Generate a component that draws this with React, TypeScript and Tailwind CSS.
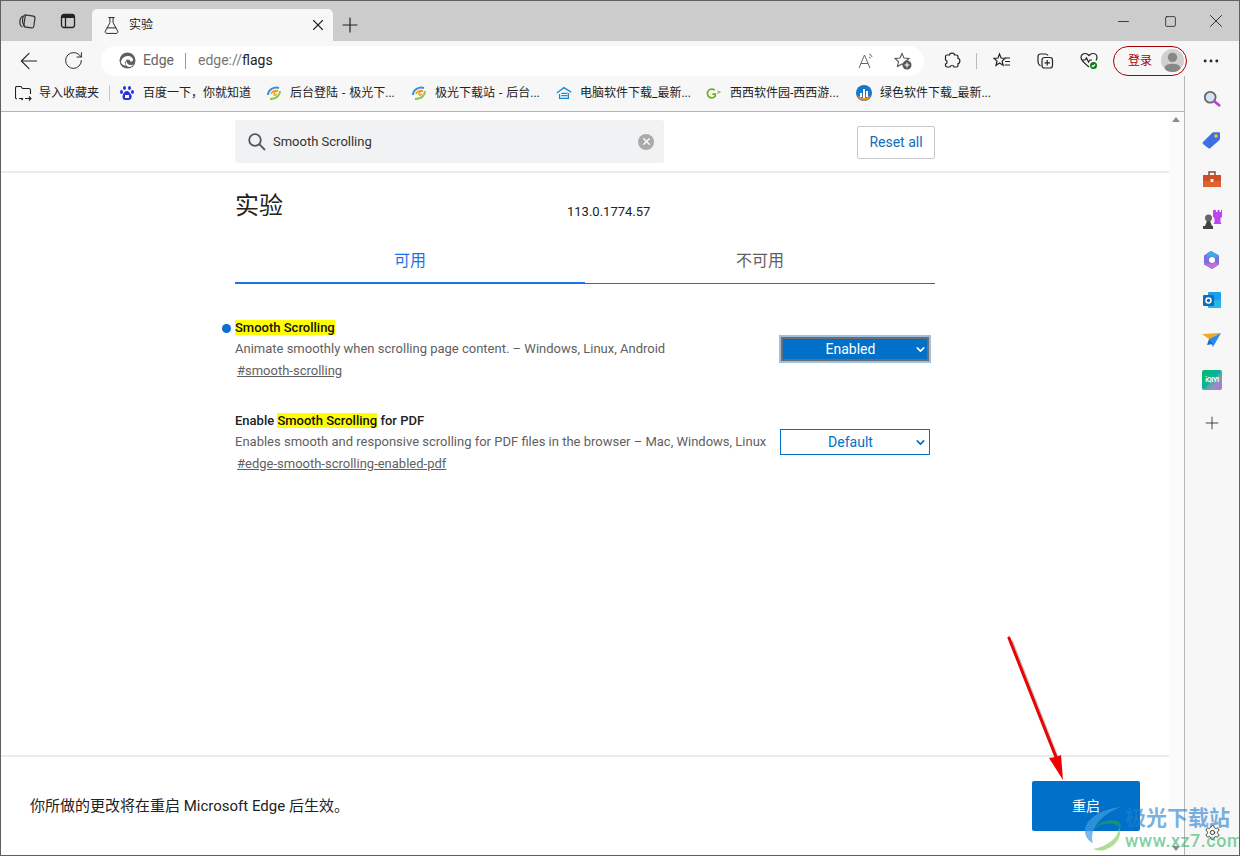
import React from 'react';
import { ArrowLeft, ChevronDown, FlaskConical, MoreHorizontal, Minus, Plus, RotateCw, Settings, Square, X } from 'lucide-react';

const cjk = "font-['Roboto','Noto_Sans_CJK_SC',sans-serif]";

const EdgeLogo = () => (
  <svg width="17" height="17" viewBox="0 0 17 17">
    <circle cx="8.5" cy="8.5" r="8" fill="#5f5f5f" />
    <path d="M2 11c0-4 3-7 7-7 3 0 5 2 5 4 0 1-1 1.700-2.500 1.700-.5-2-2-2.500-3.500-2-2 1-2.500 3.500-1 6-1.500-.2-4-1-5-2.700z" fill="#fff" />
    <path d="M8 9c-.5 2 1 4 4 4 1 0 2-.3 2.500-1-1 2.500-4 3.500-6 2.500C6.500 13.500 6.500 10.500 8 9z" fill="#fff" />
  </svg>
);

const Swirl = () => (
  <svg width="16" height="16" viewBox="0 0 16 16" fill="none">
    <path d="M13 3C8 1 2 5 2 10" stroke="#3b8ed8" strokeWidth="2" />
    <path d="M14 6c0 4-3 8-10 8" stroke="#8cc63f" strokeWidth="2" />
    <path d="M5 9c1-3 5-4 7-3-2 0-4 1-4 3s2 1 3 0" stroke="#f0a020" strokeWidth="1.500" />
  </svg>
);

const Baidu = () => (
  <svg width="16" height="16" viewBox="0 0 16 16" fill="#2932e1">
    <ellipse cx="5.500" cy="3" rx="1.500" ry="2" />
    <ellipse cx="10.500" cy="3" rx="1.500" ry="2" />
    <ellipse cx="2.500" cy="7" rx="1.500" ry="2" />
    <ellipse cx="13.500" cy="7" rx="1.500" ry="2" />
    <path d="M8 6c2 0 2.500 2 4 3.500S12.500 15 10 15H6c-2.500 0-3-3.500-2-5.500S6 6 8 6z" />
    <rect x="6" y="10" width="4" height="3" fill="#fff" />
  </svg>
);

const HouseIcon = () => (
  <svg width="18" height="16" viewBox="0 0 18 16" fill="none" stroke="#1a8ed0" strokeWidth="1.500">
    <path d="M1 8l8-6 8 5M4 9v5h10V8" />
    <path d="M6 11h7M6 8.500h7" />
  </svg>
);

const GreenG = () => (
  <svg width="20" height="18" viewBox="0 0 20 18" fill="none" stroke="#6fb01a" strokeWidth="2.200">
    <path d="M11 5.500a5.500 5.500 0 1 0 .5 7.500V10.500H8" />
    <path d="M14 6.500l4 1.500-4 1.500" strokeWidth="1" />
  </svg>
);

const GreenSoft = () => (
  <svg width="16" height="16" viewBox="0 0 16 16">
    <circle cx="8" cy="8" r="8" fill="#1677c9" />
    <path d="M1 9c2 5 12 5 14 0l-2 5-5 2-5-2z" fill="#f08a1d" />
    <rect x="7" y="4" width="2" height="9" fill="#fff" />
    <rect x="4" y="8" width="2" height="4" fill="#fff" />
    <rect x="10" y="6" width="2" height="6" fill="#fff" />
  </svg>
);

const bookmarks = [
  { icon: <Baidu />, label: '百度一下，你就知道', left: 'w-[147px]' },
  { icon: <Swirl />, label: '后台登陆 - 极光下...', left: 'w-[145px]' },
  { icon: <Swirl />, label: '极光下载站 - 后台...', left: 'w-[145px]' },
  { icon: <HouseIcon />, label: '电脑软件下载_最新...', left: 'w-[150px]' },
  { icon: <GreenG />, label: '西西软件园-西西游...', left: 'w-[150px]' },
  { icon: <GreenSoft />, label: '绿色软件下载_最新...', left: 'w-[145px]' },
];

const TabStrip = () => (
  <div className="flex h-[40px] items-end bg-[#cccccc]">
    <div className="flex h-full w-[91px] items-center">
      <svg className="ml-[17px]" width="18" height="18" viewBox="0 0 18 18" fill="none" stroke="#333" strokeWidth="1.200">
        <rect x="6.500" y="3.500" width="10" height="12" rx="2" transform="rotate(8 11 9)" />
        <path d="M5 4C3 5 1.500 8 2 12c.2 1.500 1 2.500 2.500 3" />
        <path d="M8 2.500C6 3 4.500 5 4.500 8s.5 5 2.500 6.500" />
      </svg>
      <svg className="ml-[24px]" width="16" height="16" viewBox="0 0 16 16" fill="none" stroke="#222" strokeWidth="1.300">
        <rect x="1.500" y="1.500" width="13" height="13" rx="2.500" />
        <rect x="2" y="2" width="12" height="3" fill="#222" stroke="none" />
        <path d="M5.500 5v9" />
      </svg>
    </div>
    <div className="flex h-[32px] w-[241px] items-center rounded-t-[5px] bg-[#f7f7f7] pl-[10px] pr-[6px]">
      <FlaskConical size={19} strokeWidth={1.200} className="text-[#222]" />
      <span className={`ml-[8px] flex-1 text-[12px] text-[#222] ${cjk}`}>实验</span>
      <X size={18} strokeWidth={1.500} className="text-[#222]" />
    </div>
    <Plus size={24} strokeWidth={1.200} className="mb-[4px] ml-[5px] text-[#222]" />
    <div className="ml-auto flex h-full items-center text-[#222]">
      <Minus size={17} strokeWidth={1.200} className="mr-[32px]" />
      <Square size={13} strokeWidth={1.500} className="mr-[28px]" />
      <X size={22} strokeWidth={1} className="mr-[12px]" />
    </div>
  </div>
);

const Toolbar = () => (
  <div className="flex h-[35px] items-center bg-[#f7f7f7] pt-[4px]">
    <ArrowLeft size={26} strokeWidth={1} className="ml-[15px] text-[#222]" />
    <RotateCw size={21} strokeWidth={1.100} className="ml-[21px] text-[#222]" />
    <div className="ml-[17px] flex h-[30px] w-[823px] items-center rounded-full bg-white pl-[18px] pr-[12px]">
      <EdgeLogo />
      <span className={`ml-[7px] text-[14px] text-[#666] ${cjk}`}>Edge</span>
      <span className="mx-[11px] h-[16px] w-px bg-[#999]" />
      <span className={`ml-[1px] text-[14px] text-[#777] ${cjk}`}>
        edge://<span className="text-[#222]">flags</span>
      </span>
      <div className="ml-auto flex items-center gap-[18px]">
        <svg width="18" height="18" viewBox="0 0 18 18" fill="none" stroke="#666" strokeWidth="1">
          <path d="M1 16L6.500 3l5.500 13M3 11.500h7" />
          <path d="M11 2c1.500.5 2.500 1.500 3 3M11 5c.8.3 1.300.8 1.500 1.500" />
        </svg>
        <svg width="18" height="18" viewBox="0 0 18 18" fill="none" stroke="#555" strokeWidth="1.100">
          <path d="M8 1.500l2 4.500 5 .5-3.500 3 1 5-4.500-2.500L3.500 14.500l1-5L1 6.500 6 6z" />
          <circle cx="13" cy="13" r="4.500" fill="#555" stroke="none" />
          <path d="M13 10.500v5M10.500 13h5" stroke="#fff" />
        </svg>
      </div>
    </div>
    <svg className="ml-[19px]" width="18" height="18" viewBox="0 0 18 18" fill="none" stroke="#222" strokeWidth="1.200">
      <path d="M6.500 3c0-2.500 5-2.500 5 0h2c1 0 1.500.5 1.500 1.500v2c2.500 0 2.500 5 0 5v2c0 1-.5 1.500-1.500 1.500H11c0-2-4-2-4 0H4c-1 0-1.500-.5-1.500-1.500V12c2 0 2-4 0-4V4.500C2.500 3.500 3 3 4 3z" />
    </svg>
    <span className="ml-[15px] h-[16px] w-px bg-[#bbb]" />
    <svg className="ml-[16px]" width="18" height="18" viewBox="0 0 18 18" fill="none" stroke="#222" strokeWidth="1.200">
      <path d="M6.500 2l1.600 4 4 .3-3 2.800 1 4.200-3.600-2.300L3 13.300l1-4.200L1 6.300l4-.3z" />
      <path d="M12 6h5M12 9.500h5M11.500 13h5.500" />
    </svg>
    <svg className="ml-[25px]" width="18" height="18" viewBox="0 0 18 18" fill="none" stroke="#222" strokeWidth="1.200">
      <rect x="6" y="5.500" width="10.500" height="10.500" rx="2.500" />
      <path d="M11.200 8v5.500M8.500 10.800H14" />
      <path d="M12 3.500c-.5-1-1.500-1.500-3-1.500H4.500C3 2 2 3 2 4.500V10c0 1.500 1 3 2.500 4" />
    </svg>
    <svg className="ml-[26px]" width="18" height="18" viewBox="0 0 18 18" fill="none" stroke="#222" strokeWidth="1.200">
      <path d="M9 15C4 11 1 8.500 1 5.500 1 3 3 1.500 5 1.500c1.500 0 3 .8 4 2 1-1.200 2.500-2 4-2 2 0 4 1.500 4 4 0 1-.3 2-1 3" />
      <path d="M2 8h3l1.500-2 2 4 1.500-2h2" />
      <circle cx="13.500" cy="13.500" r="3.500" fill="#107c10" stroke="none" />
      <path d="M11.800 13.500l1.200 1.200 2-2.200" stroke="#fff" />
    </svg>
    <div className="ml-[15px] flex h-[30px] w-[74px] items-center justify-between rounded-full border border-[#a80000] pl-[14px] pr-[2px]">
      <span className={`text-[12px] text-[#a80000] ${cjk}`}>登录</span>
      <svg width="23" height="23" viewBox="0 0 22 22">
        <circle cx="11" cy="11" r="11" fill="#d2d0ce" />
        <circle cx="11" cy="8" r="4.500" fill="#8a8886" />
        <ellipse cx="11" cy="18" rx="7.500" ry="4" fill="#8a8886" />
      </svg>
    </div>
    <MoreHorizontal size={20} strokeWidth={1.500} className="ml-[14px] text-[#222]" />
  </div>
);

const BookmarkBar = () => (
  <div className="flex h-[36px] items-center border-b border-[#b5b5b5] bg-[#f7f7f7] pb-[1px] pl-[14px]">
    <svg width="17" height="17" viewBox="0 0 17 17" fill="none" stroke="#222" strokeWidth="1.100">
      <path d="M2 14c-.8 0-1.500-.5-1.500-1.500V3C.5 2 1 1.500 2 1.500h4l1.500 2H14c1 0 1.500.5 1.500 1.500v4" />
      <path d="M10 13.500h6M14 11.500l2 2-2 2M8 13.500l-1.500 1.500M8 13.500H4" />
    </svg>
    <span className={`ml-[7px] text-[12px] text-[#222] ${cjk}`}>导入收藏夹</span>
    <span className="ml-[10px] h-[16px] w-px bg-[#c8c8c8]" />
    <div className="ml-[9px] flex">
      {bookmarks.map((b) => (
        <div key={b.label} className={`flex items-center gap-[8px] ${b.left}`}>
          <span className="flex w-[16px] justify-center">{b.icon}</span>
          <span className={`whitespace-nowrap text-[12px] text-[#222] [word-spacing:1px] ${cjk}`}>{b.label}</span>
        </div>
      ))}
    </div>
  </div>
);

const Hl = ({ children }: { children: React.ReactNode }) => <mark className="bg-[#ffff00] text-[#111]">{children}</mark>;

const SearchHeader = () => (
  <div className="flex h-[61px] justify-center border-b-2 border-[#ececec] pt-[8px]">
    <div className="flex w-[700px] items-start justify-between">
      <div className="flex h-[43px] w-[429px] items-center rounded-[3px] bg-[#f1f2f4] pl-[13px] pr-[10px]">
        <svg width="18" height="18" viewBox="0 0 18 18" fill="none" stroke="#555" strokeWidth="1.800">
          <circle cx="7" cy="7" r="5.800" />
          <path d="M11.200 11.200L17 17" />
        </svg>
        <span className={`ml-[7px] flex-1 text-[13px] text-[#333] ${cjk}`}>Smooth Scrolling</span>
        <span className="flex h-[16px] w-[16px] items-center justify-center rounded-full bg-[#aaa]">
          <X size={11} strokeWidth={3} className="text-white" />
        </span>
      </div>
      <button className={`mt-[6px] h-[33px] w-[78px] rounded-[2px] border border-[#c8c8c8] bg-white text-[14px] text-[#0f6cbd] ${cjk}`}>Reset all</button>
    </div>
  </div>
);

const FlagRow = (props: { title: React.ReactNode; desc: string; link: string; value: string; on?: boolean }) => (
  <div className="relative flex h-[93px] w-[700px] justify-between">
    {props.on && <span className="absolute -left-[13px] top-[5px] h-[9px] w-[9px] rounded-full bg-[#0f6cd0]" />}
    <div className={cjk}>
      <div className="h-[17px] text-[13px] font-medium leading-[17px] text-[#222]">{props.title}</div>
      <div className="mt-[4px] h-[17px] text-[13px] leading-[17px] text-[#5f5f5f]">{props.desc}</div>
      <div className="mt-[5px] pl-[2px] text-[13px] leading-[17px] text-[#5f5f5f] underline">{props.link}</div>
    </div>
    {props.on ? (
      <div className={`mr-[4px] mt-[16px] box-border flex h-[28px] w-[152px] items-center border-2 border-[#9dc0e8] bg-[#0070c9] pl-[42px] text-[14px] text-white outline-2 -outline-offset-4 outline-[#6d6d6d] ${cjk}`}>
        <span className="w-[55px] text-center">{props.value}</span>
        <ChevronDown size={13} strokeWidth={3} className="ml-auto mr-[2px]" />
      </div>
    ) : (
      <div className={`mr-[5px] mt-[17px] flex h-[26px] w-[150px] items-center border border-[#0070c9] bg-white text-[14px] text-[#0070c9] ${cjk}`}>
        <span className="ml-[47px] w-[45px] text-center">{props.value}</span>
        <ChevronDown size={13} strokeWidth={3} className="ml-auto mr-[2px]" />
      </div>
    )}
  </div>
);

const Page = () => (
  <div className="flex min-w-0 flex-1 flex-col bg-white">
    <SearchHeader />
    <div className="flex flex-1 justify-center">
      <div className="w-[700px]">
        <div className="relative h-[67px]">
          <h1 className={`pt-[16px] text-[24px] leading-[34px] text-[#222] ${cjk}`}>实验</h1>
          <span className={`absolute left-[332px] top-[29px] text-[13px] text-[#222] ${cjk}`}>113.0.1774.57</span>
        </div>
        <div className={`flex h-[44px] text-[16px] ${cjk}`}>
          <div className="flex w-[350px] items-center justify-center border-b-2 border-[#1a73e8] pb-px text-[#1a73e8]">可用</div>
          <div className="flex h-[44px] w-[350px] items-center justify-center border-b border-[#5f6368] pb-[2px] text-[#5f5f5f]">不可用</div>
        </div>
        <div className="mt-[35px]">
          <FlagRow on title={<Hl>Smooth Scrolling</Hl>} desc="Animate smoothly when scrolling page content. – Windows, Linux, Android" link="#smooth-scrolling" value="Enabled" />
          <FlagRow title={<>Enable <Hl>Smooth Scrolling</Hl> for PDF</>} desc="Enables smooth and responsive scrolling for PDF files in the browser – Mac, Windows, Linux" link="#edge-smooth-scrolling-enabled-pdf" value="Default" />
        </div>
      </div>
    </div>
    <div className="flex h-[100px] items-center justify-between border-t-2 border-[#ececec] pl-[29px] pr-[29px]">
      <span className={`text-[15px] text-[#222] ${cjk}`}>你所做的更改将在重启 Microsoft Edge 后生效。</span>
      <button className={`h-[50px] w-[108px] rounded-[2px] bg-[#0070c9] text-[14px] text-white ${cjk}`}>重启</button>
    </div>
  </div>
);

const Scrollbar = () => (
  <div className="relative w-[15px] bg-[#fbfbfb]">
    <span className="absolute left-[3px] top-[5px] h-0 w-0 border-x-[4px] border-b-[5px] border-x-transparent border-b-[#8a8a8a]" />
    <span className="absolute bottom-[4px] left-[3px] h-0 w-0 border-x-[4px] border-t-[5px] border-x-transparent border-t-[#8a8a8a]" />
  </div>
);

const SideBar = () => (
  <div className="flex w-[55px] flex-col items-center border-l border-[#b5b5b5] bg-[#f7f7f7]">
    <div className="flex flex-col items-center gap-[20px] pt-[14px]">
      <svg width="18" height="18" viewBox="0 0 20 20">
        <circle cx="8" cy="8" r="6" fill="#cfe4f5" stroke="#666" strokeWidth="2" />
        <path d="M12.500 12.500L18 17" stroke="#c13fd6" strokeWidth="3" strokeLinecap="round" />
      </svg>
      <svg className="mt-[2px]" width="20" height="20" viewBox="0 0 20 20">
        <path d="M1 12L10 3c.5-.5 1-.8 2-.8h5c.8 0 1 .4 1 1v5c0 1-.3 1.500-.8 2l-9 8c-.5.5-1.200.5-1.700 0L1 14c-.5-.5-.5-1.500 0-2z" fill="#3f6fe8" />
        <circle cx="14" cy="6" r="1.800" fill="#f5c518" />
      </svg>
      <svg width="20" height="20" viewBox="0 0 20 20">
        <rect x="7" y="2" width="6" height="4" fill="none" stroke="#8a4a2a" strokeWidth="1.500" />
        <rect x="1" y="5" width="18" height="6" fill="#c9502a" />
        <rect x="1" y="11" width="18" height="6" fill="#e0632c" />
        <rect x="8.500" y="9" width="3" height="3" fill="#eee" />
      </svg>
      <svg width="20" height="20" viewBox="0 0 20 20">
        <path d="M12 0h2v2h1.500V0h2v2H19V0h1v7l-1.500 1v4l1 2h-8l1-2V8L11 7V0z" fill="#bf45f0" />
        <circle cx="6.500" cy="8" r="3.500" fill="#666" />
        <path d="M5 11h3l2 5h1v3H1v-3h2z" fill="#444" />
      </svg>
      <svg width="20" height="20" viewBox="0 0 20 20">
        <path d="M9 1l8 4.500v9L10 19l-8-4.500v-9z" fill="#7b6fe0" />
        <path d="M9 1l8 4.500L13 8 9 6 5 8V3.300z" fill="#3fa8e8" />
        <path d="M2 13l8 6 7-4.500-4-2.500-3 2z" fill="#c070d8" />
        <circle cx="10" cy="10" r="3" fill="#fff" />
      </svg>
      <svg width="20" height="20" viewBox="0 0 20 20">
        <rect x="6" y="2" width="13" height="16" rx="1" fill="#1d9ee8" />
        <path d="M6 11l13-1v8H6z" fill="#27b7e8" />
        <rect x="1" y="5" width="11" height="11" rx="1" fill="#0f6cbd" />
        <circle cx="6.500" cy="10.500" r="2.500" fill="none" stroke="#fff" strokeWidth="1.500" />
      </svg>
      <svg width="20" height="20" viewBox="0 0 20 20">
        <path d="M0 4l19-1L7 9z" fill="#f5a623" />
        <path d="M19 3L7 9l4 8z" fill="#2b8be8" />
        <path d="M7 9l-2 6 6-1z" fill="#1c6cc0" />
      </svg>
      <div className="flex h-[20px] w-[20px] items-center justify-center rounded-[2px] bg-gradient-to-br from-[#00c060] via-[#10b0a0] to-[#d050f0] font-['Roboto',sans-serif] text-[7px] font-bold tracking-tighter text-white">iQIYI</div>
      <Plus size={20} strokeWidth={1} className="mt-[3px] text-[#222]" />
    </div>
    <Settings size={17} strokeWidth={1.200} className="mb-[14px] mt-auto text-[#222]" />
  </div>
);

const Annotations = () => (
  <>
    <svg className="pointer-events-none absolute left-[999px] top-[629px]" width="80" height="160" viewBox="0 0 80 160" fill="none">
      <path d="M11 11l47 120" stroke="#000" strokeOpacity="0.250" strokeWidth="4" />
      <path d="M9 8l47 119" stroke="#f00000" strokeWidth="3" strokeLinecap="round" />
      <path d="M63 150L49 128l7-1 5-2z" fill="#f00000" />
    </svg>
    <span className={`pointer-events-none absolute left-[1124px] top-[805px] whitespace-nowrap text-[21px] font-bold leading-[24px] text-[#1f7fd0] opacity-60 ${cjk}`}>极光下载站</span>
    <span className="pointer-events-none absolute left-[1124px] top-[830px] whitespace-nowrap font-['Roboto',sans-serif] text-[18px] font-medium leading-[20px] tracking-[0.5px] text-[#2fb36a] opacity-60">www.xz7.com</span>
    <svg className="pointer-events-none absolute left-[1080px] top-[804px]" width="70" height="48" viewBox="0 0 70 48" fill="none">
      <path d="M40 2C20 4 4 14 4 26c0 6 4 10 8 12C8 26 18 10 40 2z" fill="#3f9ce0" fillOpacity="0.700" />
      <path d="M14 24c6-8 24-6 26 0 0-4-1-6-3-8-8-2-20 0-23 8z" fill="#1a9a6a" fillOpacity="0.800" />
      <path d="M38 22c0 12-14 20-26 22 6 2 10 2 14 0 8-3 16-12 12-22z" fill="#8fd06a" fillOpacity="0.700" />
    </svg>
  </>
);

export default function App() {
  return (
    <div className="relative flex h-[856px] w-[1240px] flex-col overflow-hidden border border-[#5f5f5f]">
      <TabStrip />
      <Toolbar />
      <div className="flex min-h-0 flex-1">
        <div className="flex min-w-0 flex-1 flex-col">
          <BookmarkBar />
          <div className="flex min-h-0 flex-1">
            <Page />
            <Scrollbar />
          </div>
        </div>
        <SideBar />
      </div>
      <Annotations />
    </div>
  );
}
